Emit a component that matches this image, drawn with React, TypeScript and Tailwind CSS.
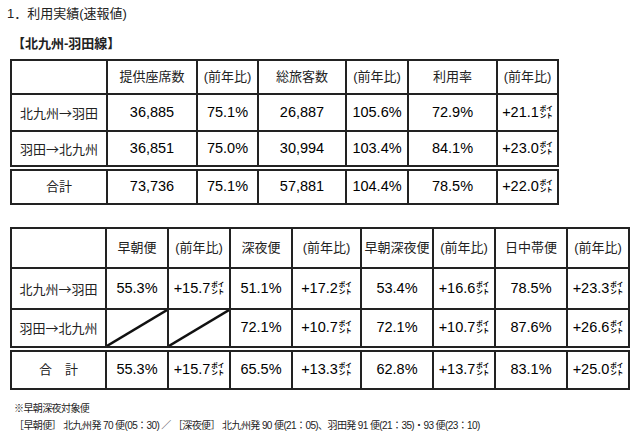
const font = { fontFamily: '"Liberation Sans", "Noto Sans CJK JP", sans-serif' };
const jp = { fontFamily: '"Noto Sans CJK JP", sans-serif' };

const Pt = ({ v }: { v: string }) => (
  <span className="inline-flex items-center">
    <span>{v}</span>
    <span className="inline-flex flex-col text-[6.5px] leading-[7px] ml-[1px] -mt-[2px] font-bold" style={jp}>
      <span>ポイ</span>
      <span>ント</span>
    </span>
  </span>
);

const Slash = () => (
  <td className="relative border-2 border-[#222] p-0">
    <svg className="absolute inset-0 w-full h-full" preserveAspectRatio="none" viewBox="0 0 100 100">
      <line x1="0" y1="100" x2="100" y2="0" stroke="#111" strokeWidth="2.4" vectorEffect="non-scaling-stroke" />
    </svg>
  </td>
);

const th = "border-2 border-[#222] text-[13px] font-normal text-center text-[#222]";
const td = "border-2 border-[#222] text-[14.5px] text-center text-[#000]";
const lab = "border-2 border-[#222] text-[13px] text-center text-[#222]";
const dbl = "border-double border-t-[6px]";

const App = () => {
  const rows1 = [
    ["北九州→羽田", "36,885", "75.1%", "26,887", "105.6%", "72.9%", "+21.1"],
    ["羽田→北九州", "36,851", "75.0%", "30,994", "103.4%", "84.1%", "+23.0"],
  ];
  const total1 = ["合計", "73,736", "75.1%", "57,881", "104.4%", "78.5%", "+22.0"];
  const w1 = [96, 90, 61, 88, 62, 89, 61];
  const w2 = [95, 62, 62, 62, 69, 72, 62, 72, 62];

  return (
    <div className="w-[638px] h-[441px] bg-white text-[#222] pl-[10px]" style={font}>
      <div className="pt-[6px] text-[13px] leading-[16px] -ml-[3px]">1．利用実績(速報値)</div>
      <div className="mt-[14px] ml-[2px] text-[13px] leading-[16px] font-bold">【北九州-羽田線】</div>

      <table className="mt-[7px] border-collapse table-fixed border-2 border-[#222]" style={{ width: 547 }}>
        <colgroup>
          {w1.map((w, i) => (
            <col key={i} style={{ width: w }} />
          ))}
        </colgroup>
        <tbody>
          <tr className="h-[34px]">
            <td className={th}></td>
            <td className={th}>提供座席数</td>
            <td className={th}>(前年比)</td>
            <td className={th}>総旅客数</td>
            <td className={th}>(前年比)</td>
            <td className={th}>利用率</td>
            <td className={th}>(前年比)</td>
          </tr>
          {rows1.map((r) => (
            <tr key={r[0]} className="h-[37px]">
              <td className={lab} style={jp}>{r[0]}</td>
              {r.slice(1, 6).map((c, i) => (
                <td key={i} className={td}>{c}</td>
              ))}
              <td className={td}><Pt v={r[6]} /></td>
            </tr>
          ))}
          <tr className="h-[36px]">
            <td className={`${lab} ${dbl}`}>{total1[0]}</td>
            {total1.slice(1, 6).map((c, i) => (
              <td key={i} className={`${td} ${dbl}`}>{c}</td>
            ))}
            <td className={`${td} ${dbl}`}><Pt v={total1[6]} /></td>
          </tr>
        </tbody>
      </table>

      <table className="mt-[22px] border-collapse table-fixed border-2 border-[#222]" style={{ width: 618 }}>
        <colgroup>
          {w2.map((w, i) => (
            <col key={i} style={{ width: w }} />
          ))}
        </colgroup>
        <tbody>
          <tr className="h-[40px]">
            <td className={th}></td>
            <td className={th}>早朝便</td>
            <td className={th}>(前年比)</td>
            <td className={th}>深夜便</td>
            <td className={th}>(前年比)</td>
            <td className={th}>早朝深夜便</td>
            <td className={th}>(前年比)</td>
            <td className={th}>日中帯便</td>
            <td className={th}>(前年比)</td>
          </tr>
          <tr className="h-[41px]">
            <td className={lab} style={jp}>北九州→羽田</td>
            <td className={td}>55.3%</td>
            <td className={td}><Pt v="+15.7" /></td>
            <td className={td}>51.1%</td>
            <td className={td}><Pt v="+17.2" /></td>
            <td className={td}>53.4%</td>
            <td className={td}><Pt v="+16.6" /></td>
            <td className={td}>78.5%</td>
            <td className={td}><Pt v="+23.3" /></td>
          </tr>
          <tr className="h-[40px]">
            <td className={lab} style={jp}>羽田→北九州</td>
            <Slash />
            <Slash />
            <td className={td}>72.1%</td>
            <td className={td}><Pt v="+10.7" /></td>
            <td className={td}>72.1%</td>
            <td className={td}><Pt v="+10.7" /></td>
            <td className={td}>87.6%</td>
            <td className={td}><Pt v="+26.6" /></td>
          </tr>
          <tr className="h-[40px]">
            <td className={`${lab} ${dbl}`}>合　計</td>
            <td className={`${td} ${dbl}`}>55.3%</td>
            <td className={`${td} ${dbl}`}><Pt v="+15.7" /></td>
            <td className={`${td} ${dbl}`}>65.5%</td>
            <td className={`${td} ${dbl}`}><Pt v="+13.3" /></td>
            <td className={`${td} ${dbl}`}>62.8%</td>
            <td className={`${td} ${dbl}`}><Pt v="+13.7" /></td>
            <td className={`${td} ${dbl}`}>83.1%</td>
            <td className={`${td} ${dbl}`}><Pt v="+25.0" /></td>
          </tr>
        </tbody>
      </table>

      <div className="mt-[10px] ml-[4px] text-[10px] leading-[17px] tracking-[-0.6px] text-[#222]">
        <div>※早朝深夜対象便</div>
        <div>［早朝便］ 北九州発 70 便(05：30) ／ ［深夜便］ 北九州発 90 便(21：05)、羽田発 91 便(21：35)・93 便(23：10)</div>
      </div>
    </div>
  );
};

export default App;
